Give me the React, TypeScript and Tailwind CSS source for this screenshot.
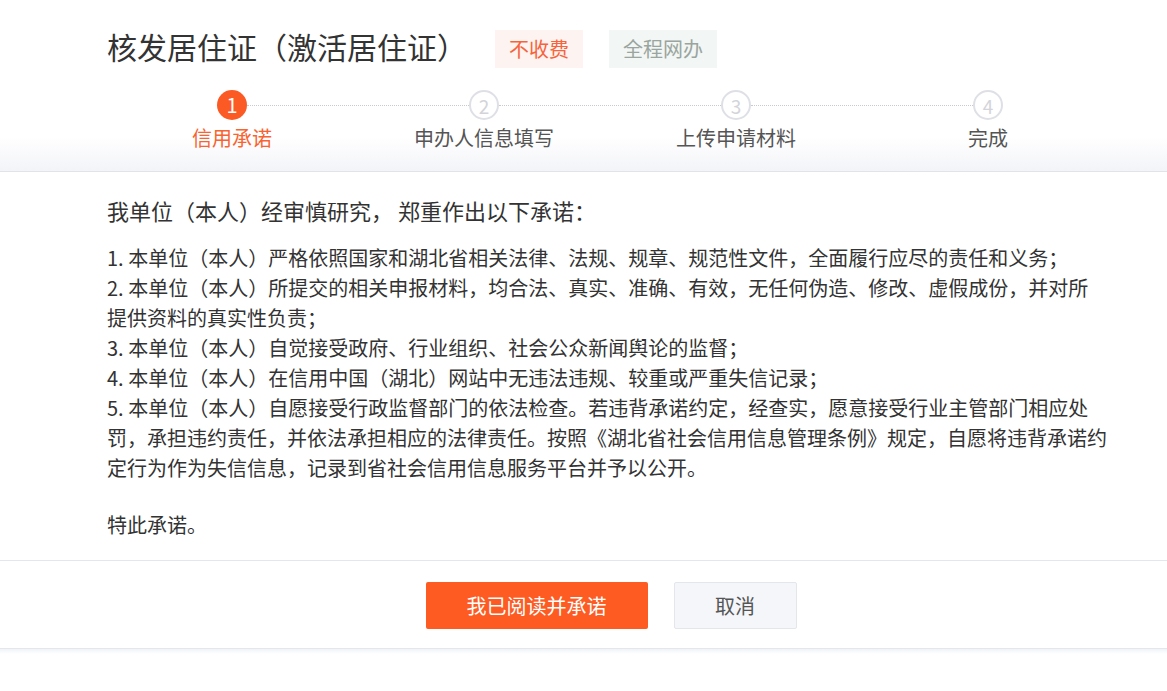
import React from "react";

const steps = ["信用承诺", "申办人信息填写", "上传申请材料", "完成"];

function Circle({ n, active }: { n: number; active?: boolean }) {
  return active ? (
    <div className="w-[30px] h-[30px] rounded-full bg-[#fb5a24] text-white flex items-center justify-center text-[20px] leading-none shrink-0">
      {n}
    </div>
  ) : (
    <div className="w-[30px] h-[30px] rounded-full border-2 border-[#dfe0e6] text-[#d3d4da] flex items-center justify-center text-[19px] leading-none shrink-0">
      {n}
    </div>
  );
}

export default function App() {
  return (
    <div className="w-[1167px] min-h-[691px] bg-white text-[#333] font-['Microsoft_YaHei','Noto_Sans_CJK_SC',sans-serif]">
      {/* Header */}
      <div className="bg-linear-to-b from-white from-80% to-[#f3f4f8] border-b border-[#e1e3e8]">
        <div className="ml-[106px] w-[1008px] pt-[30px] pb-[19px]">
          <div className="flex items-start pl-[1px]">
            <h1 className="text-[30px] leading-[32px] font-normal text-[#333]">核发居住证（激活居住证）</h1>
            <span className="ml-[28px] h-[38px] px-[14px] flex items-center bg-[#fdf3f0] text-[#f7633b] text-[20px]">不收费</span>
            <span className="ml-[26px] h-[38px] px-[14px] flex items-center bg-[#f2f6f4] text-[#9aa59f] text-[20px]">全程网办</span>
          </div>
          <div className="mt-[22px] flex items-center px-[111px]">
            <Circle n={1} active />
            <div className="flex-1 border-t border-dotted border-[#c9cacf]" />
            <Circle n={2} />
            <div className="flex-1 border-t border-dotted border-[#c9cacf]" />
            <Circle n={3} />
            <div className="flex-1 border-t border-dotted border-[#c9cacf]" />
            <Circle n={4} />
          </div>
          <div className="mt-[4px] grid grid-cols-4 text-center text-[20px] leading-[28px]">
            {steps.map((s, i) => (
              <div key={s} className={i === 0 ? "text-[#f8632f]" : "text-[#555]"}>
                {s}
              </div>
            ))}
          </div>
        </div>
      </div>

      {/* Body */}
      <div className="ml-[107px] w-[1020px] pt-[23px] pb-[20px] whitespace-nowrap">
        <h2 className="text-[22px] leading-[30px] font-normal">我单位（本人）经审慎研究， 郑重作出以下承诺：</h2>
        <div className="mt-[18px] text-[20px] leading-[30px]">
          <p>1. 本单位（本人）严格依照国家和湖北省相关法律、法规、规章、规范性文件，全面履行应尽的责任和义务；</p>
          <p>
            2. 本单位（本人）所提交的相关申报材料，均合法、真实、准确、有效，无任何伪造、修改、虚假成份，并对所
            <br />
            提供资料的真实性负责；
          </p>
          <p>3. 本单位（本人）自觉接受政府、行业组织、社会公众新闻舆论的监督；</p>
          <p>4. 本单位（本人）在信用中国（湖北）网站中无违法违规、较重或严重失信记录；</p>
          <p>
            5. 本单位（本人）自愿接受行政监督部门的依法检查。若违背承诺约定，经查实，愿意接受行业主管部门相应处
            <br />
            罚，承担违约责任，并依法承担相应的法律责任。按照《湖北省社会信用信息管理条例》规定，自愿将违背承诺约
            <br />
            定行为作为失信信息，记录到省社会信用信息服务平台并予以公开。
          </p>
        </div>
        <p className="mt-[27px] text-[20px] leading-[30px]">特此承诺。</p>
      </div>

      {/* Footer */}
      <div className="border-t border-b border-[#e4e6eb]">
        <div className="ml-[107px] w-[1008px] pt-[21px] pb-[19px] flex justify-center gap-[26px]">
          <button className="w-[222px] h-[47px] rounded-[2px] bg-[#fd5b22] text-white text-[20px]">我已阅读并承诺</button>
          <button className="w-[123px] h-[47px] rounded-[2px] bg-[#f4f6f9] border border-[#e3e6eb] text-[#555] text-[20px]">取消</button>
        </div>
      </div>
      <div className="h-[5px] bg-linear-to-b from-[#eff3f8] to-white" />
    </div>
  );
}
